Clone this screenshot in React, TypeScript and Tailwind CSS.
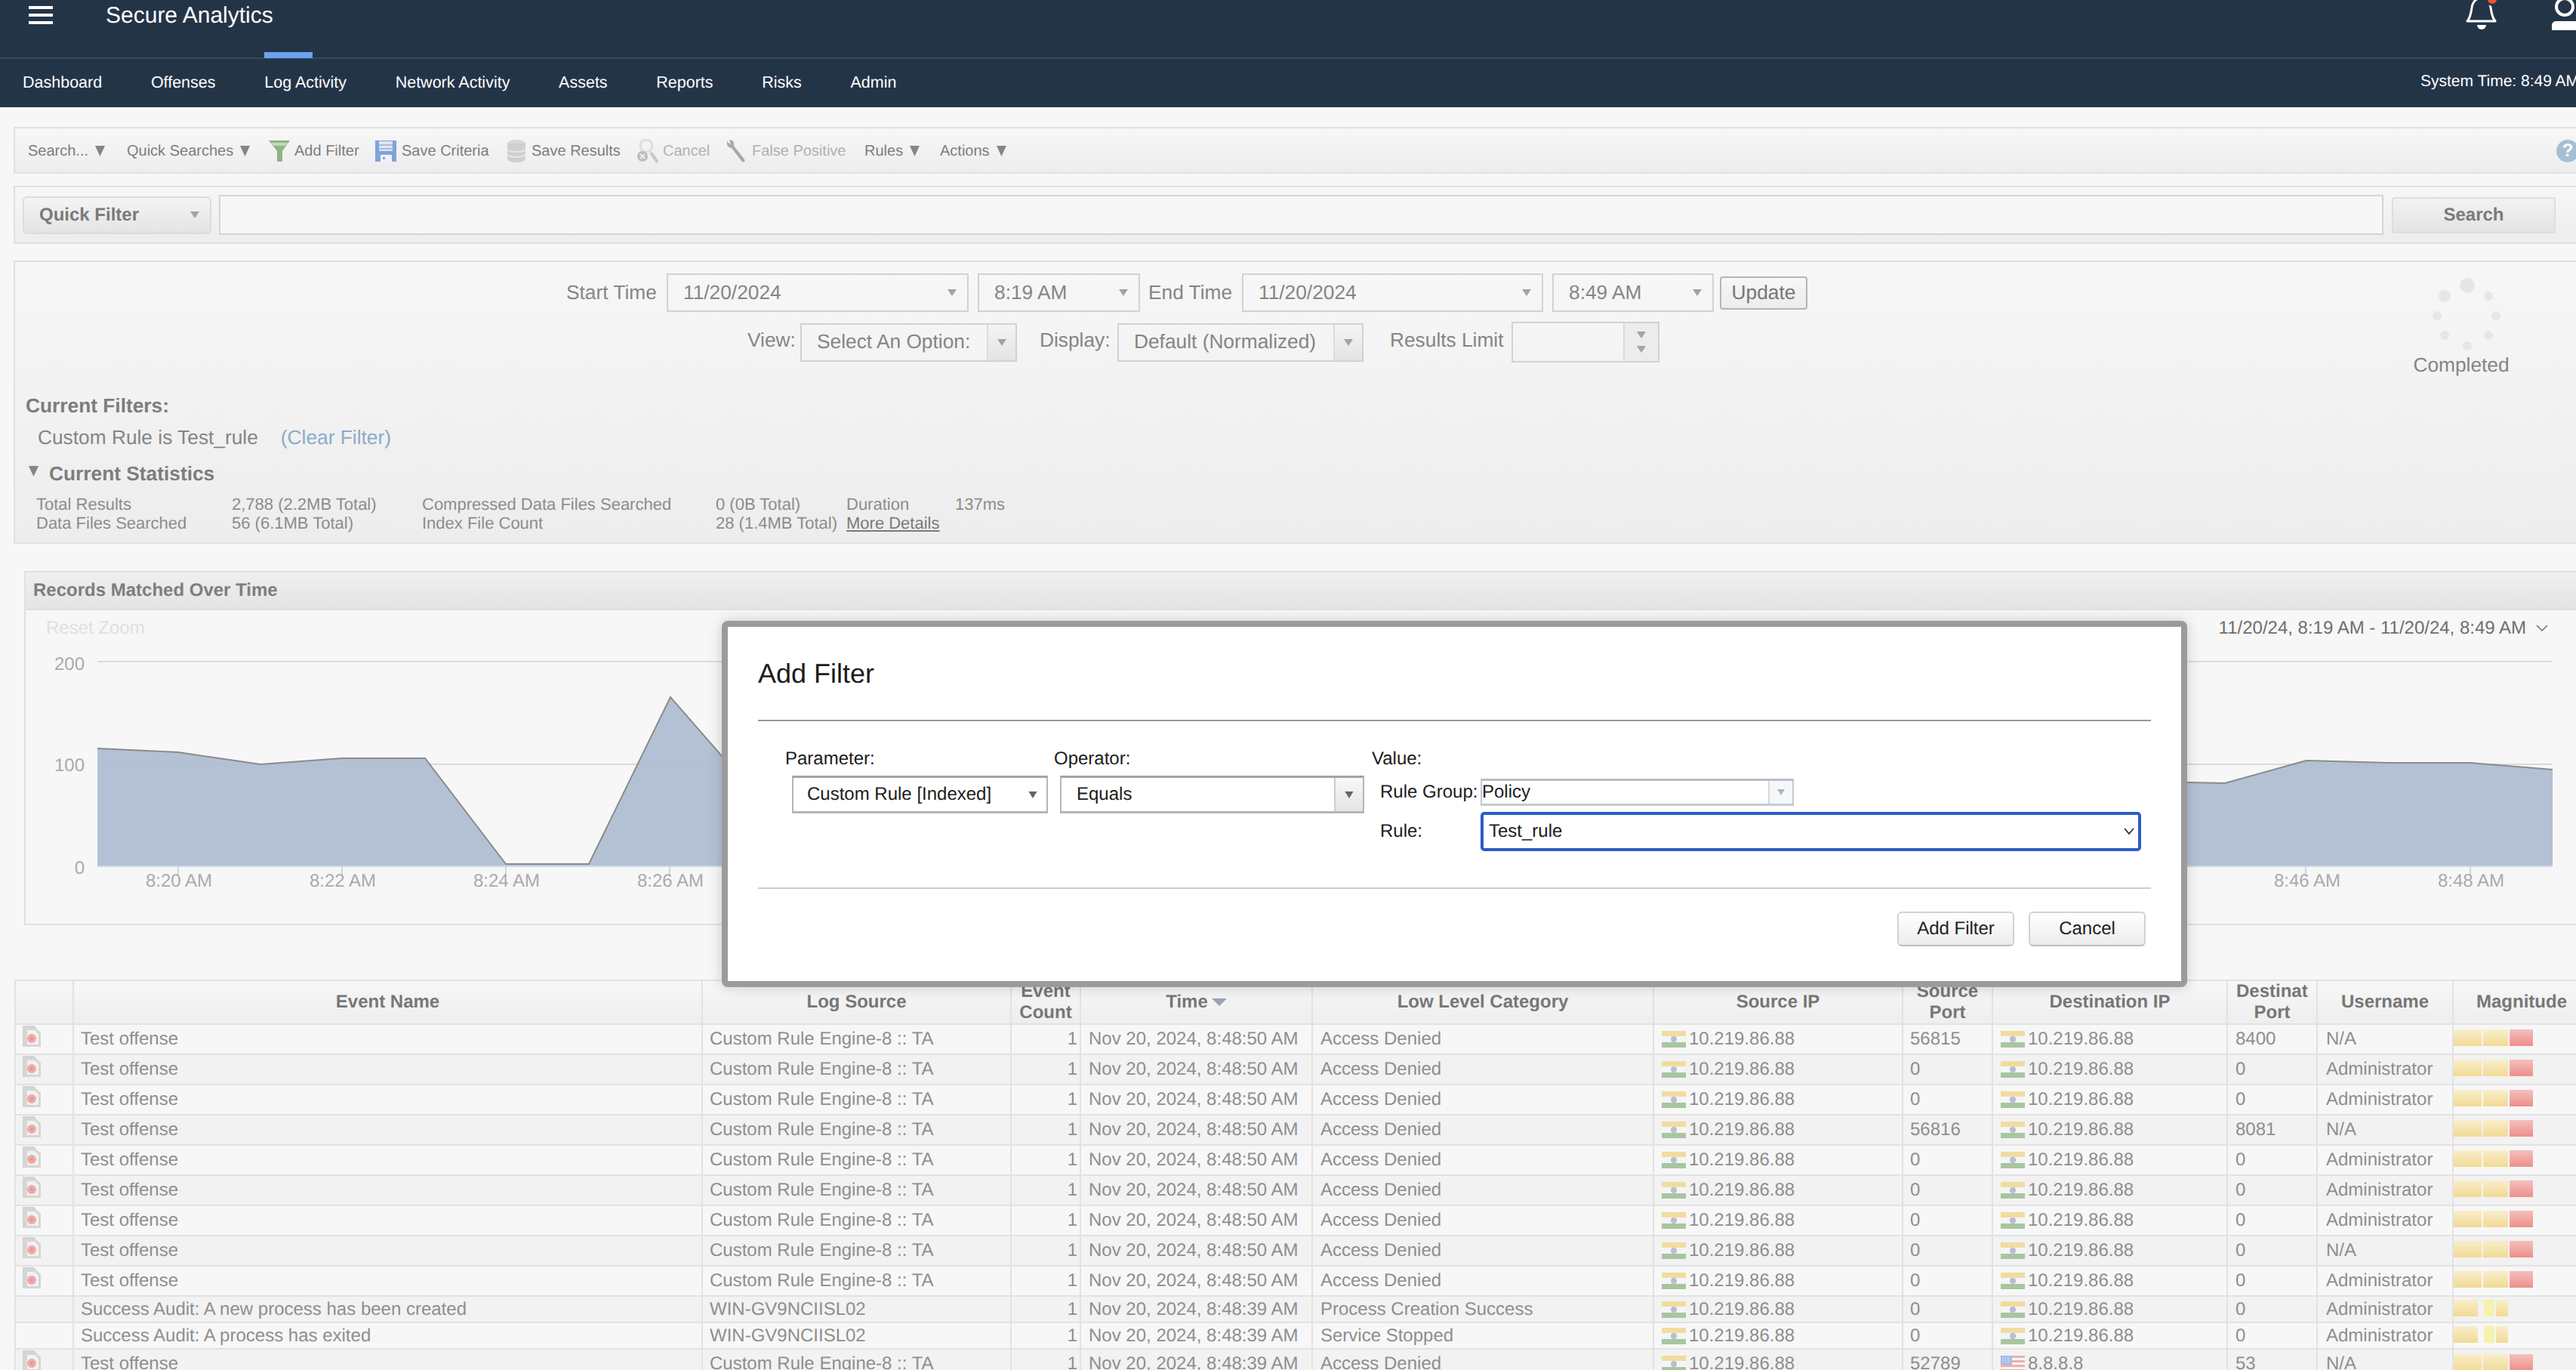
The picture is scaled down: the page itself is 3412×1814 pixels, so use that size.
import React from 'react';

const navItems = ['Dashboard', 'Offenses', 'Log Activity', 'Network Activity', 'Assets', 'Reports', 'Risks', 'Admin'];

const columns = [77, 833, 409, 92, 307, 452, 330, 119, 311, 119, 180, 200];

const OFFENSE = 'Test offense';
const ENGINE = 'Custom Rule Engine-8 :: TA';
const HOST = 'WIN-GV9NCIISL02';
const IP = '10.219.86.88';

const rows = [
  { name: OFFENSE, source: ENGINE, time: '8:48:50', cat: 'Access Denied', sport: '56815', dest: IP, dport: '8400', user: 'N/A' },
  { name: OFFENSE, source: ENGINE, time: '8:48:50', cat: 'Access Denied', sport: '0', dest: IP, dport: '0', user: 'Administrator' },
  { name: OFFENSE, source: ENGINE, time: '8:48:50', cat: 'Access Denied', sport: '0', dest: IP, dport: '0', user: 'Administrator' },
  { name: OFFENSE, source: ENGINE, time: '8:48:50', cat: 'Access Denied', sport: '56816', dest: IP, dport: '8081', user: 'N/A' },
  { name: OFFENSE, source: ENGINE, time: '8:48:50', cat: 'Access Denied', sport: '0', dest: IP, dport: '0', user: 'Administrator' },
  { name: OFFENSE, source: ENGINE, time: '8:48:50', cat: 'Access Denied', sport: '0', dest: IP, dport: '0', user: 'Administrator' },
  { name: OFFENSE, source: ENGINE, time: '8:48:50', cat: 'Access Denied', sport: '0', dest: IP, dport: '0', user: 'Administrator' },
  { name: OFFENSE, source: ENGINE, time: '8:48:50', cat: 'Access Denied', sport: '0', dest: IP, dport: '0', user: 'N/A' },
  { name: OFFENSE, source: ENGINE, time: '8:48:50', cat: 'Access Denied', sport: '0', dest: IP, dport: '0', user: 'Administrator' },
  { name: 'Success Audit: A new process has been created', source: HOST, time: '8:48:39', cat: 'Process Creation Success', sport: '0', dest: IP, dport: '0', user: 'Administrator', audit: true },
  { name: 'Success Audit: A process has exited', source: HOST, time: '8:48:39', cat: 'Service Stopped', sport: '0', dest: IP, dport: '0', user: 'Administrator', audit: true },
  { name: OFFENSE, source: ENGINE, time: '8:48:39', cat: 'Access Denied', sport: '52789', dest: '8.8.8.8', dport: '53', user: 'N/A' },
];

const Caret = ({ className = 'w-[13px] h-[14px] text-[#858585]' }: { className?: string }) => (
  <svg viewBox="0 0 10 12" preserveAspectRatio="none" className={`${className} shrink-0`}>
    <path d="M0 0H10L5 12Z" fill="currentColor" />
  </svg>
);

const SmallCaret = () => (
  <svg viewBox="0 0 10 8" preserveAspectRatio="none" className="w-[12px] h-[9px] shrink-0 text-[#a3a3a3]">
    <path d="M0 0H10L5 8Z" fill="currentColor" />
  </svg>
);

const FunnelIcon = () => (
  <svg viewBox="0 0 30 30" className="w-[30px] h-[30px] mr-[5px] shrink-0">
    <path d="M1 1H29L19 15V29H12V15Z" fill="#8fb386" />
    <path d="M4 4H26L23 8H7Z" fill="#c4d8be" />
  </svg>
);

const FloppyIcon = () => (
  <svg viewBox="0 0 30 30" className="w-[30px] h-[30px] mr-[6px] shrink-0">
    <path d="M1 1H29V29H1Z" fill="#7fa3dc" />
    <path d="M6 2H24V15H6Z" fill="#dfe5ee" />
    <path d="M6 6H24V8H6ZM6 11H24V13H6Z" fill="#a9bedf" />
    <path d="M8 20H23V29H8Z" fill="#f2f2f2" />
    <path d="M11 23H14V26H11Z" fill="#7fa3dc" />
  </svg>
);

const DatabaseIcon = () => (
  <svg viewBox="0 0 26 30" className="w-[26px] h-[30px] mr-[7px] shrink-0">
    <ellipse cx="13" cy="5" rx="12" ry="5" fill="#d7d7d7" />
    <path d="M1 5V25C1 28 7 30 13 30S25 28 25 25V5Z" fill="#cfcfcf" />
    <path d="M1 13C5 17 21 17 25 13M1 20C5 24 21 24 25 20" stroke="#e6e6e6" strokeWidth="2" fill="none" />
  </svg>
);

const CancelIcon = () => (
  <svg viewBox="0 0 30 32" className="w-[30px] h-[32px] mr-[6px] shrink-0">
    <circle cx="14" cy="9" r="8" fill="none" stroke="#dedede" strokeWidth="3" />
    <path d="M20 18L29 31" stroke="#c8c8c8" strokeWidth="4" />
    <circle cx="9" cy="23" r="7" fill="#bdbdbd" />
    <path d="M6 20L12 26M12 20L6 26" stroke="#eeeeee" strokeWidth="2" />
  </svg>
);

const WrenchIcon = () => (
  <svg viewBox="0 0 30 32" className="w-[30px] h-[32px] mr-[6px] shrink-0">
    <path d="M3 3L8 8L6 1C11 1 13 5 12 9L26 27C28 30 24 32 22 29L9 12C5 12 2 8 3 3Z" fill="#a9a9a9" />
  </svg>
);

const FileIcon = () => (
  <svg viewBox="0 0 24 28" className="w-[24px] h-[28px] block">
    <path d="M0 0H15L18 3V5H3V28H0Z" fill="#d4d4d4" />
    <path d="M3 3H17L24 9V28H3Z" fill="#d6d6d6" />
    <path d="M6 6H16L21 11V25H6Z" fill="#f1f1f1" />
    <circle cx="12" cy="17" r="6" fill="#f0a9a9" />
    <circle cx="12" cy="17" r="2" fill="#e98f8f" />
  </svg>
);

const IndiaFlag = () => (
  <svg viewBox="0 0 32 22" className="w-[32px] h-[22px] shrink-0">
    <path d="M0 0H32V7H0Z" fill="#f1dca0" />
    <path d="M0 7H32V15H0Z" fill="#f5f5f5" />
    <path d="M0 15H32V22H0Z" fill="#a8c5a0" />
    <circle cx="16" cy="11" r="4" fill="#b6bed6" />
  </svg>
);

const UsaFlag = () => (
  <svg viewBox="0 0 32 22" className="w-[32px] h-[22px] shrink-0">
    <path d="M0 0H32V22H0Z" fill="#f5f5f5" />
    <path d="M0 0H32V3H0ZM0 6H32V9H0ZM0 12H32V15H0ZM0 18H32V22H0Z" fill="#efaeae" />
    <path d="M0 0H15V12H0Z" fill="#a4b9e6" />
    <path d="M2 3H13M2 6H13M2 9H13" stroke="#d5def3" strokeWidth="1.5" strokeDasharray="2 1.5" />
  </svg>
);

const Magnitude = ({ low }: { low?: boolean }) =>
  low ? (
    <div className="flex h-[22px] mb-[4px]">
      <div className="w-[32px] bg-gradient-to-b from-[#f8eecb] to-[#f2da94]" />
      <div className="w-[14px] ml-[8px] bg-[#f4f3ab]" />
      <div className="w-[16px] ml-[2px] bg-gradient-to-b from-[#f8eecb] to-[#f2da94]" />
    </div>
  ) : (
    <div className="flex h-[22px] mb-[4px]">
      <div className="w-[37px] bg-gradient-to-b from-[#f8eecb] to-[#f2da94]" />
      <div className="w-[33px] ml-[2px] bg-gradient-to-b from-[#f8eecb] to-[#f2da94]" />
      <div className="w-[31px] ml-[2px] bg-gradient-to-b from-[#f3c0bd] to-[#ee8e8a]" />
    </div>
  );

const ToolItem = ({ w, icon, label, menu, muted }: { w: string; icon?: React.ReactNode; label: string; menu?: boolean; muted?: boolean }) => (
  <div className={`flex items-center shrink-0 ${w} ${muted ? 'text-[#b0b0b0]' : 'text-[#7d7d7d]'}`}>
    {icon}
    <span>{label}</span>
    {menu && (
      <span className="ml-[9px]">
        <Caret />
      </span>
    )}
  </div>
);

const DateSelect = ({ w, text, className = '' }: { w: string; text: string; className?: string }) => (
  <div className={`h-[51px] ${w} ${className} flex items-center justify-between border-2 border-[#d2d2d2] pl-[20px] pr-[14px] text-[#858585] shrink-0`}>
    <span>{text}</span>
    <SmallCaret />
  </div>
);

const ArrowSelect = ({ w, text }: { w: string; text: string }) => (
  <div className={`h-[51px] ${w} flex items-stretch border-2 border-[#d2d2d2] shrink-0 text-[#858585]`}>
    <div className="flex-1 flex items-center pl-[20px] whitespace-nowrap overflow-hidden">{text}</div>
    <div className="w-[38px] flex items-center justify-center border-l-2 border-[#dcdcdc] bg-gradient-to-b from-[#f4f4f4] to-[#e4e4e4]">
      <SmallCaret />
    </div>
  </div>
);

const HeadCell = ({ children }: { children: React.ReactNode }) => (
  <th className="border-2 border-[#e2e2e2] font-bold text-[#777777] text-center align-middle p-0 leading-[28px]">
    <div className="mx-[11px] overflow-hidden">{children}</div>
  </th>
);

const ModalButton = ({ label }: { label: string }) => (
  <div className="w-[155px] h-[46px] flex items-center justify-center rounded-[6px] border-2 border-[#d2d2d2] border-b-[#bcbcbc] bg-gradient-to-b from-[#ffffff] to-[#ececec] text-[#222222]">
    {label}
  </div>
);

const chartPoints = '129,991 236,996 345,1012 453,1004 563,1004 670,1144 780,1144 888,923 997,1048 1200,1040 2800,1034 2947,1037 3055,1007 3163,1010 3272,1010 3381,1019';

const ChartPlot = () => (
  <svg viewBox="34 856 3400 340" className="w-[3400px] h-[340px] block shrink-0" fontFamily="'Liberation Sans', sans-serif">
    <path d="M129 876H3381M129 1012H3381" stroke="#dadada" strokeWidth="2" />
    <polygon points={`129,1146 ${chartPoints} 3381,1146`} fill="#aebcd2" fillOpacity="0.93" />
    <polyline points={chartPoints} fill="none" stroke="#8b8b8b" strokeWidth="2" />
    <path d="M129 1147H3381" stroke="#ccd6eb" strokeWidth="2" />
    <path d="M236 1147V1160M453 1147V1160M670 1147V1160M887 1147V1160M3054 1147V1160M3272 1147V1160" stroke="#ccd6eb" strokeWidth="2" />
    <g fill="#aaaaaa" fontSize="24" textAnchor="end">
      <text x="112" y="887">200</text>
      <text x="112" y="1021">100</text>
      <text x="112" y="1157">0</text>
    </g>
    <g fill="#aaaaaa" fontSize="24" textAnchor="middle">
      <text x="237" y="1174">8:20 AM</text>
      <text x="454" y="1174">8:22 AM</text>
      <text x="671" y="1174">8:24 AM</text>
      <text x="888" y="1174">8:26 AM</text>
      <text x="3056" y="1174">8:46 AM</text>
      <text x="3273" y="1174">8:48 AM</text>
    </g>
  </svg>
);

const Spinner = () => (
  <svg viewBox="0 0 170 115" className="w-[170px] h-[115px] block shrink-0" fill="#e6e6e6">
    <circle cx="88" cy="28" r="10" />
    <circle cx="116" cy="42" r="6" />
    <circle cx="126" cy="68" r="6" />
    <circle cx="116" cy="94" r="6" />
    <circle cx="88" cy="108" r="6" />
    <circle cx="58" cy="94" r="6" />
    <circle cx="48" cy="68" r="6" />
    <circle cx="58" cy="42" r="8" />
  </svg>
);

export default function App() {
  return (
    <div className="relative w-[3412px] h-[1814px] overflow-hidden bg-[#f7f7f7] font-['Liberation_Sans',Arial,sans-serif] [text-rendering:geometricPrecision]">
      {/* top bar */}
      <div className="h-[142px] bg-[#243447] text-white">
        <div className="h-[78px] border-b-2 border-[#2f4a63] flex items-start">
          <div className="ml-[38px] mt-[8px] w-[32px] h-[24px] flex flex-col justify-between">
            <div className="h-[4px] bg-white" />
            <div className="h-[4px] bg-white" />
            <div className="h-[4px] bg-white" />
          </div>
          <div className="ml-[70px] text-[30px] leading-[42px]">Secure Analytics</div>
          <div className="ml-auto flex items-start">
            <svg viewBox="0 0 44 42" className="w-[44px] h-[42px]">
              <path d="M3 28C8 22 8 15 9 10C10 2 16 -3 22 -3C28 -3 33 2 34 10C35 15 35 22 40 28Z" fill="none" stroke="#ffffff" strokeWidth="3" strokeLinejoin="round" />
              <path d="M16 33H28A6 6 0 0 1 16 33Z" fill="#ffffff" />
              <circle cx="36" cy="-1" r="9" fill="#243447" />
              <circle cx="36" cy="-1" r="6" fill="#e8562a" />
            </svg>
            <svg viewBox="0 0 50 40" className="ml-[71px] mr-[-18px] w-[50px] h-[40px]">
              <circle cx="17" cy="9" r="11" fill="none" stroke="#ffffff" strokeWidth="4" />
              <path d="M0 40V33C0 30 3 28 6 28H44V40Z" fill="#ffffff" />
            </svg>
          </div>
        </div>
        <div className="relative flex items-center h-[64px] pl-[30px] text-[21.5px]">
          <div className="flex gap-[64.7px] mt-[-1px]">
            {navItems.map((item) => (
              <div key={item} className="relative whitespace-nowrap">
                {item === 'Log Activity' && <div className="absolute left-0 top-[-24px] w-[64px] h-[8px] bg-[#6ba4ee]" />}
                {item}
              </div>
            ))}
          </div>
          <div className="ml-auto w-[206px] shrink-0 whitespace-nowrap text-[21px] mt-[-4px]">System Time: 8:49 AM</div>
        </div>
      </div>

      {/* toolbar */}
      <div className="ml-[18px] mt-[26px] w-[3420px] h-[62px] flex items-center border-2 border-[#e0e0e0] pl-[17px] pr-[20px] pt-[1px] text-[20px] bg-gradient-to-b from-[#f7f7f7] to-[#ededed]">
        <ToolItem w="w-[131px]" label="Search..." menu />
        <ToolItem w="w-[187px]" label="Quick Searches" menu />
        <ToolItem w="w-[141px]" label="Add Filter" icon={<FunnelIcon />} />
        <ToolItem w="w-[175px]" label="Save Criteria" icon={<FloppyIcon />} />
        <ToolItem w="w-[171px]" label="Save Results" icon={<DatabaseIcon />} />
        <ToolItem w="w-[118px]" label="Cancel" icon={<CancelIcon />} muted />
        <ToolItem w="w-[185px]" label="False Positive" icon={<WrenchIcon />} muted />
        <ToolItem w="w-[100px]" label="Rules" menu />
        <ToolItem w="w-[100px]" label="Actions" menu />
        <div className="ml-auto w-[30px] h-[30px] rounded-full bg-[#a5bfd4] text-white font-bold text-[24px] flex items-center justify-center">?</div>
      </div>

      {/* quick filter */}
      <div className="ml-[18px] mt-[16px] w-[3420px] h-[77px] flex items-center border-2 border-[#e0e0e0] pl-[10px] text-[24px] font-bold text-[#7a7a7a] bg-gradient-to-b from-[#f7f7f7] to-[#ededed]">
        <div className="w-[250px] h-[50px] flex items-center justify-between rounded-[6px] border-2 border-[#dcdcdc] pl-[20px] pr-[14px] bg-gradient-to-b from-[#f4f4f4] to-[#e4e4e4]">
          <span>Quick Filter</span>
          <SmallCaret />
        </div>
        <div className="ml-[10px] w-[2867px] h-[53px] border-2 border-[#d2d6da] bg-[#f7f7f7]" />
        <div className="ml-[11px] w-[217px] h-[48px] flex items-center justify-center rounded-[4px] border-2 border-[#dedede] bg-gradient-to-b from-[#f2f2f2] to-[#e4e4e4]">Search</div>
      </div>

      {/* time range + filters + statistics */}
      <div className="ml-[18px] mt-[22px] w-[3420px] h-[375px] border-2 border-[#e0e0e0] text-[26.3px] text-[#858585] bg-gradient-to-b from-[#f7f7f7] to-[#ededed]">
        <div className="flex h-[130px]">
          <div className="w-[3160px] shrink-0 pt-[15px]">
            <div className="flex items-center pl-[730px]">
              <div className="w-[133px] shrink-0">Start Time</div>
              <DateSelect w="w-[400px]" text="11/20/2024" />
              <DateSelect w="w-[215px]" text="8:19 AM" className="ml-[12px]" />
              <div className="w-[124px] ml-[11px] shrink-0">End Time</div>
              <DateSelect w="w-[399px]" text="11/20/2024" />
              <DateSelect w="w-[214px]" text="8:49 AM" className="ml-[12px]" />
              <div className="ml-[8px] w-[116px] h-[44px] shrink-0 flex items-center justify-center rounded-[4px] border-2 border-[#b5b5b5] bg-gradient-to-b from-[#f7f7f7] to-[#ececec] text-[#777777]">Update</div>
            </div>
            <div className="flex items-center pl-[970px] mt-[13px]">
              <div className="w-[70px] shrink-0 mt-[-4px]">View:</div>
              <ArrowSelect w="w-[287px]" text="Select An Option:" />
              <div className="ml-[30px] w-[103px] shrink-0 mt-[-4px]">Display:</div>
              <ArrowSelect w="w-[326px]" text="Default (Normalized)" />
              <div className="ml-[35px] w-[161px] shrink-0 mt-[-4px]">Results Limit</div>
              <div className="w-[196px] h-[54px] shrink-0 flex justify-end border-2 border-[#d2d2d2]">
                <div className="w-[46px] flex flex-col items-center justify-around border-l-2 border-[#dcdcdc] bg-[#ececec] py-[6px]">
                  <SmallCaret />
                  <SmallCaret />
                </div>
              </div>
            </div>
          </div>
          <div className="w-[170px] shrink-0 pt-[3px] flex flex-col items-center">
            <Spinner />
            <div className="mt-[-1px] ml-[-10px] text-[#858585]">Completed</div>
          </div>
        </div>

        <div className="pl-[14px] mt-[45px] leading-[30px] font-bold text-[#7d7d7d]">Current Filters:</div>
        <div className="pl-[30px] mt-[12px] leading-[30px] flex">
          <span>Custom Rule is Test_rule</span>
          <span className="ml-[30px] text-[#8cabc9]">(Clear Filter)</span>
        </div>
        <div className="pl-[18px] mt-[18px] leading-[30px] flex items-center font-bold text-[#7d7d7d]">
          <span className="mb-[6px]">
            <Caret />
          </span>
          <span className="ml-[14px]">Current Statistics</span>
        </div>
        <div className="pl-[28px] mt-[13px] grid grid-cols-[259px_252px_389px_173px_144px_1fr] text-[22px] leading-[25px] text-[#8c8c8c]">
          <div>Total Results</div>
          <div>2,788 (2.2MB Total)</div>
          <div>Compressed Data Files Searched</div>
          <div>0 (0B Total)</div>
          <div>Duration</div>
          <div>137ms</div>
          <div>Data Files Searched</div>
          <div>56 (6.1MB Total)</div>
          <div>Index File Count</div>
          <div className="whitespace-nowrap">28 (1.4MB Total)</div>
          <div className="underline text-[#7a7a7a]">More Details</div>
          <div />
        </div>
      </div>

      {/* chart */}
      <div className="ml-[32px] mt-[36px] w-[3420px] h-[469px] border-2 border-[#e0e0e0] flex flex-col">
        <div className="h-[48px] shrink-0 flex items-center pl-[10px] border-b-2 border-[#e0e0e0] text-[24px] font-bold text-[#7d7d7d] bg-gradient-to-b from-[#efefef] to-[#e4e4e4] box-content">
          Records Matched Over Time
        </div>
        <div className="h-[48px] shrink-0 flex items-start justify-between pt-[6px] pl-[27px] text-[24px]">
          <span className="text-[#e0e0e0]">Reset Zoom</span>
          <div className="flex items-center text-[#6e6e6e] mr-[75px]">
            <span>11/20/24, 8:19 AM - 11/20/24, 8:49 AM</span>
            <svg viewBox="0 0 16 10" className="ml-[13px] w-[16px] h-[10px]">
              <path d="M1 1L8 8L15 1" fill="none" stroke="#6e6e6e" strokeWidth="1.5" />
            </svg>
          </div>
        </div>
        <ChartPlot />
      </div>

      {/* events table */}
      <div className="ml-[19px] mt-[72px]">
        <table className="table-fixed border-collapse w-[3429px] text-[24px]">
          <colgroup>
            {columns.map((w, i) => (
              <col key={i} style={{ width: w }} />
            ))}
          </colgroup>
          <thead>
            <tr className="h-[58px] bg-gradient-to-b from-[#f7f7f7] to-[#eeeeee]">
              <HeadCell>{''}</HeadCell>
              <HeadCell>Event Name</HeadCell>
              <HeadCell>Log Source</HeadCell>
              <th className="border-2 border-[#e2e2e2] font-bold text-[#777777] text-center align-middle p-0 leading-[28px]">
                <div className="h-[56px] overflow-hidden">Event Count</div>
              </th>
              <HeadCell>
                <span className="inline-flex items-center">
                  Time
                  <svg viewBox="0 0 20 10" className="ml-[5px] w-[20px] h-[10px]">
                    <path d="M0 0H20L10 10Z" fill="#9aa4b4" />
                  </svg>
                </span>
              </HeadCell>
              <HeadCell>Low Level Category</HeadCell>
              <HeadCell>Source IP</HeadCell>
              <HeadCell>
                Source
                <br />
                Port
              </HeadCell>
              <HeadCell>Destination IP</HeadCell>
              <HeadCell>Destination Port</HeadCell>
              <HeadCell>Username</HeadCell>
              <th className="border-2 border-[#e2e2e2] font-bold text-[#777777] text-left align-middle pl-[30px] leading-[28px]">Magnitude</th>
            </tr>
          </thead>
          <tbody className="text-[#8e8e8e] leading-[28px]">
            {rows.map((row, i) => (
              <tr key={i} className={`${row.audit ? 'h-[35px]' : 'h-[40px]'} ${i % 2 === 0 ? 'bg-[#f7f7f7]' : 'bg-[#f2f2f2]'}`}>
                <td className="border-2 border-[#e2e2e2] pl-[9px] align-top pt-[1px]">{!row.audit && <FileIcon />}</td>
                <td className="border-2 border-[#e2e2e2] pl-[9px] whitespace-nowrap">{row.name}</td>
                <td className="border-2 border-[#e2e2e2] pl-[9px] whitespace-nowrap">{row.source}</td>
                <td className="border-2 border-[#e2e2e2] pr-[3px] text-right">1</td>
                <td className="border-2 border-[#e2e2e2] pl-[10px] whitespace-nowrap">Nov 20, 2024, {row.time} AM</td>
                <td className="border-2 border-[#e2e2e2] pl-[10px] whitespace-nowrap">{row.cat}</td>
                <td className="border-2 border-[#e2e2e2] pl-[10px]">
                  <div className="flex items-center gap-[4px]">
                    <IndiaFlag />
                    {IP}
                  </div>
                </td>
                <td className="border-2 border-[#e2e2e2] pl-[9px]">{row.sport}</td>
                <td className="border-2 border-[#e2e2e2] pl-[10px]">
                  <div className="flex items-center gap-[4px]">
                    {row.dest === IP ? <IndiaFlag /> : <UsaFlag />}
                    {row.dest}
                  </div>
                </td>
                <td className="border-2 border-[#e2e2e2] pl-[10px]">{row.dport}</td>
                <td className="border-2 border-[#e2e2e2] pl-[11px]">{row.user}</td>
                <td className="border-2 border-[#e2e2e2] pl-0">
                  <Magnitude low={row.audit} />
                </td>
              </tr>
            ))}
          </tbody>
        </table>
      </div>

      {/* Add Filter dialog */}
      <div className="absolute left-[956px] top-[822px] w-[1941px] h-[485px] rounded-[8px] border-[8px] border-[#9b9b9b] bg-white px-[40px] text-[24px] text-[#1c1c1c] shadow-[0_0_18px_rgba(0,0,0,0.18)]">
        <div className="h-[123px] flex items-center text-[36px]">Add Filter</div>
        <div className="h-[2px] bg-[#999999]" />
        <div className="h-[220px] flex pl-[36px] pt-[35px]">
          <div className="w-[356px] shrink-0">
            <div className="leading-[30px]">Parameter:</div>
            <div className="ml-[9px] mt-[7px] w-[339px] h-[50px] flex items-center justify-between border-y-[3px] border-x-2 border-[#b5b5b5] border-t-[#a3a3a3] pl-[18px] pr-[12px]">
              <span>Custom Rule [Indexed]</span>
              <svg viewBox="0 0 10 8" className="w-[12px] h-[9px] text-[#666666]">
                <path d="M0 0H10L5 8Z" fill="currentColor" />
              </svg>
            </div>
          </div>
          <div className="w-[421px] shrink-0">
            <div className="leading-[30px]">Operator:</div>
            <div className="ml-[8px] mt-[7px] w-[403px] h-[50px] flex border-y-[3px] border-x-2 border-[#b5b5b5] border-t-[#a3a3a3]">
              <div className="flex-1 flex items-center pl-[20px]">Equals</div>
              <div className="w-[38px] flex items-center justify-center border-l-2 border-[#cccccc] bg-gradient-to-b from-[#f8f8f8] to-[#e4e4e4]">
                <svg viewBox="0 0 10 8" className="w-[12px] h-[9px] text-[#666666]">
                  <path d="M0 0H10L5 8Z" fill="currentColor" />
                </svg>
              </div>
            </div>
          </div>
          <div>
            <div className="leading-[30px]">Value:</div>
            <div className="flex items-center ml-[11px] mt-[11px]">
              <div className="w-[133px] shrink-0">Rule Group:</div>
              <div className="w-[415px] h-[36px] flex border-y-[3px] border-x-2 border-[#c4cad4] border-t-[#b8bec8]">
                <div className="flex-1 flex items-center">Policy</div>
                <div className="w-[32px] flex items-center justify-center border-l-2 border-[#d4d8de] bg-[#f6f7f9]">
                  <svg viewBox="0 0 10 8" className="w-[10px] h-[8px]">
                    <path d="M0 0H10L5 8Z" fill="#aab4cc" />
                  </svg>
                </div>
              </div>
            </div>
            <div className="flex items-center ml-[11px] mt-[8px]">
              <div className="w-[133px] shrink-0">Rule:</div>
              <div className="w-[875px] h-[52px] flex items-center justify-between rounded-[5px] border-[4px] border-[#2a5cc8] pl-[7px] pr-[5px]">
                <span>Test_rule</span>
                <svg viewBox="0 0 14 10" className="w-[14px] h-[10px]">
                  <path d="M1 1L7 8L13 1" fill="none" stroke="#222222" strokeWidth="1.6" />
                </svg>
              </div>
            </div>
          </div>
        </div>
        <div className="h-[2px] bg-[#cccccc]" />
        <div className="flex justify-end gap-[19px] pr-[7px] mt-[30px]">
          <ModalButton label="Add Filter" />
          <ModalButton label="Cancel" />
        </div>
      </div>
    </div>
  );
}
